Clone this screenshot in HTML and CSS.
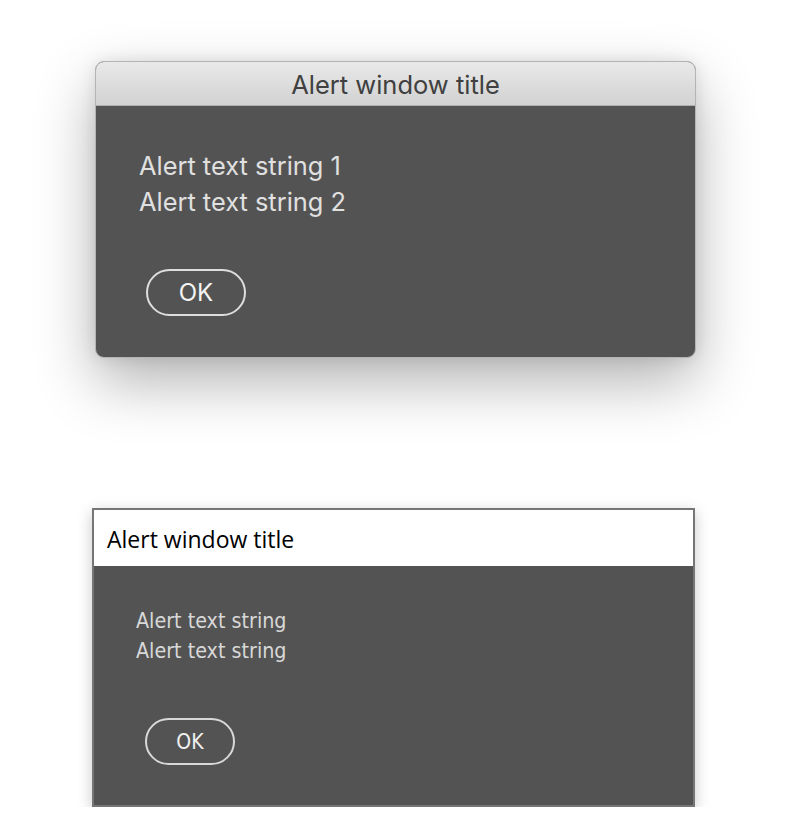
FILE: index.html
```html
<!DOCTYPE html>
<html>
<head>
<meta charset="utf-8">
<link rel="stylesheet" href="styles.css">
</head>
<body>
<div class="page">
  <div class="mac-dialog">
    <div class="mac-title">Alert window title</div>
    <div class="mac-body">
      <div class="mac-text">
        <div class="mac-line">Alert text string 1</div>
        <div class="mac-line">Alert text string 2</div>
      </div>
      <button class="mac-ok">OK</button>
    </div>
  </div>
  <div class="win-dialog">
    <div class="win-title">Alert window title</div>
    <div class="win-body">
      <div class="win-text">
        <div class="win-line">Alert text string</div>
        <div class="win-line">Alert text string</div>
      </div>
      <button class="win-ok">OK</button>
    </div>
  </div>
</div>
</body>
</html>
```
FILE: styles.css
```css
html, body {
  margin: 0;
  padding: 0;
  background: #ffffff;
}
.page {
  display: flex;
  flex-direction: column;
  padding-top: 61px;
}
.mac-dialog {
  margin-left: 95px;
  width: 601px;
  height: 297px;
  border-radius: 9px;
  overflow: hidden;
  box-sizing: border-box;
  border: 1px solid #b4b4b4;
  box-shadow: 0 24px 60px rgba(0,0,0,0.3), 0 0 16px rgba(0,0,0,0.1);
  display: flex;
  flex-direction: column;
  background: #535353;
}
.mac-title {
  height: 43px;
  flex: none;
  background: linear-gradient(#e9e9e9, #d2d2d2);
  border-bottom: 1px solid #b0b0b0;
  text-align: center;
  font-family: Inter, "Noto Sans", sans-serif;
  font-size: 25.5px;
  line-height: 45px;
  color: #404040;
}
.mac-body {
  flex: 1;
  padding: 42px 0 0 43px;
  display: flex;
  flex-direction: column;
  align-items: flex-start;
}
.mac-text {
  font-family: Inter, "Noto Sans", sans-serif;
  font-size: 25.4px;
  line-height: 36px;
  color: #e0e0e0;
}
.mac-ok {
  margin-top: 49px;
  margin-left: 7px;
  width: 100px;
  height: 47px;
  border: 2px solid #dedede;
  border-radius: 24px;
  background: transparent;
  color: #f4f4f4;
  font-family: Inter, "Noto Sans", sans-serif;
  font-size: 24px;
  padding: 0;
}
.win-dialog {
  margin-top: 150px;
  margin-left: 92px;
  width: 603px;
  height: 299px;
  box-sizing: border-box;
  border: 2px solid #767676;
  box-shadow: 0 4px 14px rgba(0,0,0,0.22);
  display: flex;
  flex-direction: column;
  background: #535353;
}
.win-title {
  height: 56px;
  flex: none;
  background: #ffffff;
  font-family: "Open Sans", sans-serif;
  font-size: 23px;
  line-height: 58px;
  padding-left: 13px;
  color: #000000;
}
.win-body {
  flex: 1;
  padding: 40px 0 0 42px;
  display: flex;
  flex-direction: column;
  align-items: flex-start;
}
.win-text {
  font-family: "DejaVu Sans Condensed", "DejaVu Sans", sans-serif;
  font-size: 21.3px;
  line-height: 30px;
  color: #d8d8d8;
}
.win-ok {
  margin-top: 52px;
  margin-left: 9px;
  width: 90px;
  height: 47px;
  border: 2px solid #d8d8d8;
  border-radius: 24px;
  background: transparent;
  color: #f0f0f0;
  font-family: "DejaVu Sans Condensed", "DejaVu Sans", sans-serif;
  font-size: 21px;
  padding: 0;
}
```
